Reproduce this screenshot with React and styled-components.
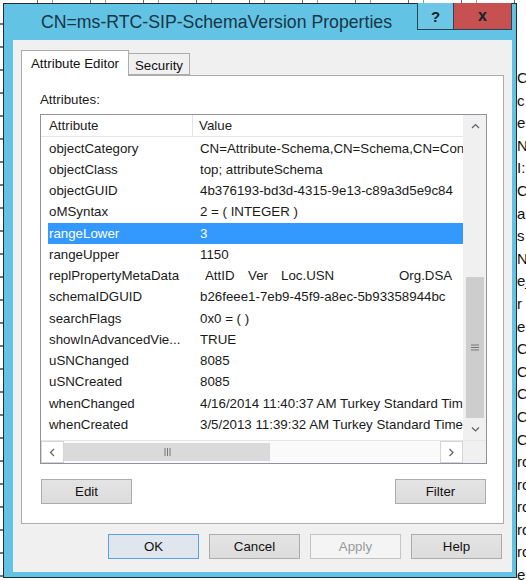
import React from 'react';
import styled, { createGlobalStyle } from 'styled-components';

const GlobalStyle = createGlobalStyle`
  html, body {
    margin: 0;
    padding: 0;
    background: #fff;
  }
  body {
    font-family: 'Liberation Sans', Arial, sans-serif;
    color: #1a1a1a;
  }
`;

const Screen = styled.div`
  width: 526px;
  height: 580px;
  overflow: hidden;
  display: flex;
  flex-direction: column;
  background: #fff;
`;

const TopEdge = styled.div`
  height: 3px;
  flex: none;
  background: repeating-linear-gradient(
    90deg,
    transparent 0 37px,
    #6a6a6a 37px 38px,
    transparent 38px 52px,
    #9a9a9a 52px 53px
  );
`;

const Desk = styled.div`
  display: flex;
  align-items: flex-start;
`;

const LeftEdge = styled.div`
  width: 3px;
  height: 577px;
  flex: none;
  background: repeating-linear-gradient(
    180deg,
    transparent 0 20px,
    #777 20px 22px,
    transparent 22px 23px
  );
`;

const RightEdge = styled.div`
  flex: 1;
  height: 577px;
  overflow: hidden;
  padding-top: 64px;
  font-size: 15px;
  line-height: 22.6px;
  color: #111;
  white-space: nowrap;
`;

const Window = styled.div`
  width: 512px;
  height: 573px;
  flex: none;
  border: 1px solid #1d2e38;
  background: #62c3e5;
  display: flex;
  flex-direction: column;
`;

const TitleBar = styled.div`
  height: 36px;
  flex: none;
  display: flex;
  align-items: flex-start;
`;

const TitleText = styled.div`
  flex: 1;
  align-self: center;
  text-align: center;
  padding-left: 12px;
  font-size: 17.7px;
  color: #183645;
  white-space: nowrap;
`;

const CaptionButtons = styled.div`
  display: flex;
  margin-top: -1px;
  margin-right: 4px;
  border: 1px solid #2a4452;
  border-top: none;
`;

const CaptionButton = styled.div`
  width: ${p => p.$w}px;
  height: 26px;
  display: flex;
  align-items: center;
  justify-content: center;
  background: ${p => (p.$close ? '#c75050' : '#6cc7e6')};
  border-left: ${p => (p.$close ? '1px solid #2a4452' : 'none')};
  font-size: ${p => (p.$close ? '16px' : '15px')};
  font-weight: bold;
  color: #10222c;
`;

const Content = styled.div`
  flex: 1;
  margin: 0 4px 5px 9px;
  background: #f0f0f0;
  padding: 10px 8px 13px 8px;
  display: flex;
  flex-direction: column;
`;

const TabStrip = styled.div`
  height: 25px;
  display: flex;
  align-items: flex-end;
  position: relative;
  z-index: 1;
`;

const Tab = styled.div`
  height: ${p => (p.$active ? '26px' : '22px')};
  box-sizing: border-box;
  margin-bottom: ${p => (p.$active ? '-1px' : '0')};
  padding: ${p => (p.$active ? '5px 9px 0 9px' : '4px 6px 0 6px')};
  border: 1px solid #acacac;
  border-bottom: ${p => (p.$active ? 'none' : '1px solid #acacac')};
  border-left: ${p => (p.$active ? '1px solid #acacac' : 'none')};
  background: ${p => (p.$active ? '#fff' : '#f0f0f0')};
  font-size: 13.3px;
  color: #111;
  white-space: nowrap;
`;

const Panel = styled.div`
  height: 449px;
  box-sizing: border-box;
  border: 1px solid #acacac;
  background: #fff;
  padding: 16px 16px 19px 18px;
  display: flex;
  flex-direction: column;
`;

const Label = styled.div`
  font-size: 13.3px;
  line-height: 16px;
  margin-bottom: 6px;
`;

const ListBox = styled.div`
  width: 447px;
  height: 350px;
  box-sizing: border-box;
  border: 1px solid #8e9299;
  display: grid;
  grid-template-columns: 422px 23px;
  grid-template-rows: 325px 23px;
`;

const ListMain = styled.div`
  overflow: hidden;
  display: flex;
  flex-direction: column;
`;

const Header = styled.div`
  height: 22px;
  flex: none;
  box-sizing: border-box;
  display: grid;
  grid-template-columns: 152px 1fr;
  border-bottom: 1px solid #e5e5e5;
  font-size: 13.3px;
  color: #222;
`;

const HeaderCell = styled.div`
  display: flex;
  align-items: center;
  padding-left: ${p => p.$pad}px;
  border-right: ${p => (p.$divider ? '1px solid #e5e5e5' : 'none')};
`;

const Rows = styled.div`
  padding-top: 0.5px;
`;

const Row = styled.div`
  height: 21.25px;
  margin-left: 7px;
  display: grid;
  grid-template-columns: 145px 1fr;
  align-items: center;
  background: ${p => (p.$selected ? '#3399ff' : 'transparent')};
  color: ${p => (p.$selected ? '#fff' : '#1a1a1a')};
  font-size: 13.3px;
  white-space: nowrap;
`;

const AttrCell = styled.div`
  padding-left: 1px;
  overflow: hidden;
  text-overflow: ellipsis;
`;

const ValueCell = styled.div`
  padding-left: 7px;
  overflow: hidden;
`;

const MetaPart = styled.span`
  display: inline-block;
  width: ${p => p.$w}px;
  padding-left: ${p => p.$pad || 0}px;
`;

const VScroll = styled.div`
  background: #f0f0f0;
  border-left: 1px solid #f0f0f0;
  display: flex;
  flex-direction: column;
`;

const ArrowBox = styled.div`
  flex: none;
  width: ${p => p.$w || 22}px;
  height: ${p => p.$h || 22}px;
  display: flex;
  align-items: center;
  justify-content: center;
  background: ${p => p.$bg || '#f0f0f0'};
  box-sizing: border-box;
  border: ${p => (p.$framed ? '1px solid #d6d6d6' : 'none')};
`;

const VTrack = styled.div`
  flex: 1;
  display: flex;
  flex-direction: column;
  justify-content: flex-end;
  padding: 0 2px;
`;

const VThumb = styled.div`
  height: 141px;
  background: #cdcdcd;
  display: flex;
  align-items: center;
  justify-content: center;
`;

const HScroll = styled.div`
  display: flex;
  align-items: stretch;
  background: #fafafa;
  border-top: 1px solid #e6e6e6;
`;

const HTrack = styled.div`
  flex: 1;
  display: flex;
  align-items: center;
  padding: 2px 0;
`;

const HThumb = styled.div`
  width: 206px;
  height: 100%;
  background: #dadada;
  display: flex;
  align-items: center;
  justify-content: center;
`;

const Corner = styled.div`
  background: #f0f0f0;
  border-top: 1px solid #e6e6e6;
`;

const PanelButtons = styled.div`
  margin-top: 15px;
  padding: 0 1px;
  display: flex;
  justify-content: space-between;
  width: 447px;
  box-sizing: border-box;
`;

const DialogButtons = styled.div`
  margin-top: 10px;
  display: flex;
  justify-content: flex-end;
  gap: 10px;
  padding-right: 2px;
`;

const Button = styled.div`
  width: 91px;
  height: 25px;
  box-sizing: border-box;
  display: flex;
  align-items: center;
  justify-content: center;
  font-size: 13.3px;
  border: 1px solid ${p => (p.$default ? '#5aa1e3' : p.$disabled ? '#c4c4c4' : '#acacac')};
  background: ${p =>
    p.$default ? '#dfe6ed' : p.$disabled ? '#f4f4f4' : 'linear-gradient(#e4e4e4, #dcdcdc)'};
  color: ${p => (p.$disabled ? '#9a9a9a' : '#111')};
`;

const Chevron = ({ dir }) => {
  const paths = {
    up: 'M1 5 L4.5 1.5 L8 5',
    down: 'M1 1.5 L4.5 5 L8 1.5',
    left: 'M5 1 L1.5 4.5 L5 8',
    right: 'M1.5 1 L5 4.5 L1.5 8',
  };
  const vertical = dir === 'up' || dir === 'down';
  return (
    <svg width={vertical ? 9 : 7} height={vertical ? 7 : 9} viewBox={vertical ? '0 0 9 7' : '0 0 7 9'}>
      <path d={paths[dir]} fill="none" stroke="#606060" strokeWidth="1.2" />
    </svg>
  );
};

const GripH = () => (
  <svg width="8" height="7" viewBox="0 0 8 7">
    <path d="M0 1h8M0 3.5h8M0 6h8" stroke="#777" strokeWidth="1" />
  </svg>
);

const GripV = () => (
  <svg width="7" height="8" viewBox="0 0 7 8">
    <path d="M1 0v8M3.5 0v8M6 0v8" stroke="#777" strokeWidth="1" />
  </svg>
);

const rows = [
  ['objectCategory', 'CN=Attribute-Schema,CN=Schema,CN=Configuration,DC=contoso,DC=com'],
  ['objectClass', 'top; attributeSchema'],
  ['objectGUID', '4b376193-bd3d-4315-9e13-c89a3d5e9c84'],
  ['oMSyntax', '2 = ( INTEGER )'],
  ['rangeLower', '3', true],
  ['rangeUpper', '1150'],
  ['replPropertyMetaData', 'meta'],
  ['schemaIDGUID', 'b26feee1-7eb9-45f9-a8ec-5b93358944bc'],
  ['searchFlags', '0x0 = ( )'],
  ['showInAdvancedVie...', 'TRUE'],
  ['uSNChanged', '8085'],
  ['uSNCreated', '8085'],
  ['whenChanged', '4/16/2014 11:40:37 AM Turkey Standard Time'],
  ['whenCreated', '3/5/2013 11:39:32 AM Turkey Standard Time'],
];

const edgeLetters = ['C', 'c', 'e', 'N', 'I:', 'C', 'a', 's', 'N', 'ej', 'r', 'e', 'C', 'C', 'C', 'C', 'C', 'ro', 'ro', 'ro', 'ro', 'ro', 'er'];

export default function App() {
  return (
    <>
      <GlobalStyle />
      <Screen>
        <TopEdge />
        <Desk>
          <LeftEdge />
          <Window>
            <TitleBar>
              <TitleText>CN=ms-RTC-SIP-SchemaVersion Properties</TitleText>
              <CaptionButtons>
                <CaptionButton $w={35}>?</CaptionButton>
                <CaptionButton $w={57} $close>x</CaptionButton>
              </CaptionButtons>
            </TitleBar>
            <Content>
              <TabStrip>
                <Tab $active>Attribute Editor</Tab>
                <Tab>Security</Tab>
              </TabStrip>
              <Panel>
                <Label>Attributes:</Label>
                <ListBox>
                  <ListMain>
                    <Header>
                      <HeaderCell $pad={8} $divider>Attribute</HeaderCell>
                      <HeaderCell $pad={6}>Value</HeaderCell>
                    </Header>
                    <Rows>
                      {rows.map(([name, value, selected]) => (
                        <Row key={name} $selected={selected}>
                          <AttrCell>{name}</AttrCell>
                          <ValueCell>
                            {value === 'meta' ? (
                              <>
                                <MetaPart $w={43} $pad={5}>AttID</MetaPart>
                                <MetaPart $w={33}>Ver</MetaPart>
                                <MetaPart $w={118}>Loc.USN</MetaPart>
                                <MetaPart $w={80}>Org.DSA</MetaPart>
                              </>
                            ) : (
                              value
                            )}
                          </ValueCell>
                        </Row>
                      ))}
                    </Rows>
                  </ListMain>
                  <VScroll>
                    <ArrowBox $w={22} $h={22}>
                      <Chevron dir="up" />
                    </ArrowBox>
                    <VTrack>
                      <VThumb>
                        <GripH />
                      </VThumb>
                    </VTrack>
                    <ArrowBox $w={22} $h={22}>
                      <Chevron dir="down" />
                    </ArrowBox>
                  </VScroll>
                  <HScroll>
                    <ArrowBox $w={23} $bg="#fff" $framed>
                      <Chevron dir="left" />
                    </ArrowBox>
                    <HTrack>
                      <HThumb>
                        <GripV />
                      </HThumb>
                    </HTrack>
                    <ArrowBox $w={23} $bg="#fff" $framed>
                      <Chevron dir="right" />
                    </ArrowBox>
                  </HScroll>
                  <Corner />
                </ListBox>
                <PanelButtons>
                  <Button>Edit</Button>
                  <Button>Filter</Button>
                </PanelButtons>
              </Panel>
              <DialogButtons>
                <Button $default>OK</Button>
                <Button>Cancel</Button>
                <Button $disabled>Apply</Button>
                <Button>Help</Button>
              </DialogButtons>
            </Content>
          </Window>
          <RightEdge>
            {edgeLetters.map((l, i) => (
              <div key={i}>{l}</div>
            ))}
          </RightEdge>
        </Desk>
      </Screen>
    </>
  );
}
